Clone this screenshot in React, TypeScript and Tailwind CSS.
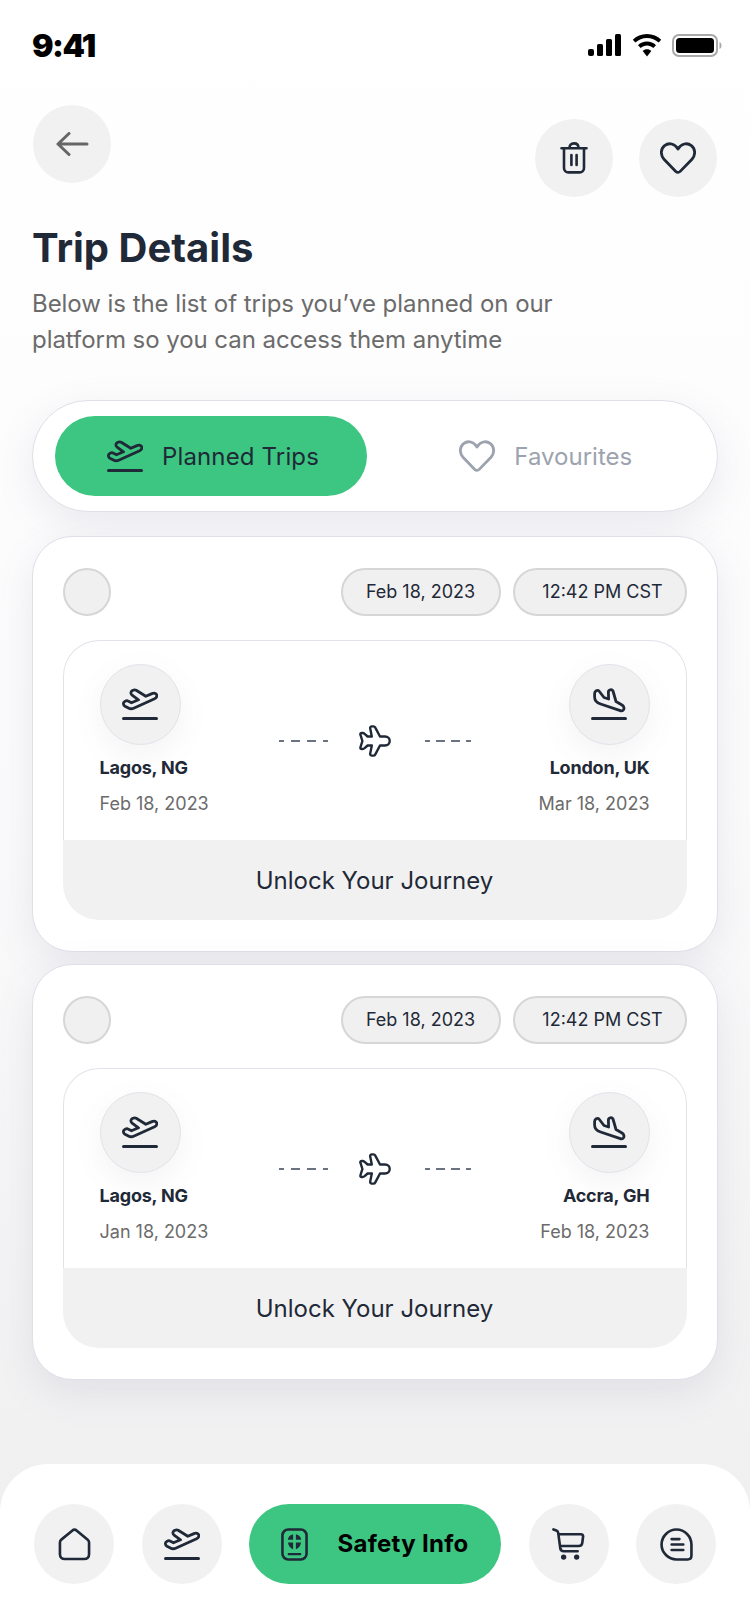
import type { ReactNode } from "react"

const trips = [
  { from: "Lagos, NG", fromDate: "Feb 18, 2023", to: "London, UK", toDate: "Mar 18, 2023" },
  { from: "Lagos, NG", fromDate: "Jan 18, 2023", to: "Accra, GH", toDate: "Feb 18, 2023" },
]

function TakeoffIcon({ className = "" }: { className?: string }) {
  return (
    <svg width="36" height="32" viewBox="0 0 36 32" fill="none" stroke="currentColor" strokeWidth="2.8" strokeLinecap="round" strokeLinejoin="round" className={className}>
      <path d="M5.5 12.8 9.5 14.8 16.5 11.8 9.8 6.8C8.4 5.6 8.8 3.4 10.4 2.6 11.6 2 12.9 1.6 14.2 2.3L23.8 8.3 30 5.6C32.2 4.7 34.4 5.4 34.8 7.2 35.1 8.8 34.2 10 32.6 10.8L12.2 20C10 21 8.2 21 6.4 20L3 18.2C1 17 .9 14.6 2.6 13.6 3.6 13 4.6 12.3 5.5 12.8Z" />
      <path d="M1.5 30.4H34.5" strokeWidth="3" />
    </svg>
  )
}

function LandingIcon({ className = "" }: { className?: string }) {
  return (
    <svg width="36" height="32" viewBox="0 0 36 32" fill="none" stroke="currentColor" strokeWidth="2.8" strokeLinecap="round" strokeLinejoin="round" className={className}>
      <path d="M3.6 5.5C3.6 3.2 6.4 1.4 8 3L13 9.5 17.6 11 17.4 4C17.4 1.6 20.8.8 22 3L25 13.5 31 17C33 18.2 33.4 20.4 32.6 21.6 31.8 23 30 23 28.6 22.4L9.6 16C5.8 14.8 3.6 12.4 3.6 9Z" />
      <path d="M1.5 30.4H34.5" strokeWidth="3" />
    </svg>
  )
}

function PlaneIcon() {
  return (
    <svg width="32" height="32" viewBox="0 0 32 32" fill="none" stroke="currentColor" strokeWidth="2.4" strokeLinejoin="round" className="shrink-0">
      <path d="M11.2 3.4C11 2.3 11.8 1.4 12.8 1.4H14.4C15.2 1.4 15.9 1.8 16.3 2.6L21 11.5H26C29 11.5 30.7 13.8 30.7 16S29 20.5 26 20.5H21L16.3 29.4C15.9 30.2 15.2 30.6 14.4 30.6H12.8C11.8 30.6 11 29.7 11.2 28.6L12.8 20.5H8.6L5.6 23.2C5 23.7 4.4 24 3.6 24H2.6C1.7 24 1.1 23.2 1.4 22.4L3.4 16 1.4 9.6C1.1 8.8 1.7 8 2.6 8H3.6C4.4 8 5 8.3 5.6 8.8L8.6 11.5H12.8Z" />
    </svg>
  )
}

function HeartIcon({ className = "" }: { className?: string }) {
  return (
    <svg width="36" height="32" viewBox="0 0 36 32" fill="none" stroke="currentColor" strokeWidth="2.8" strokeLinejoin="round" className={className}>
      <path d="M18 30.4C17.2 30.4 16.4 30 15.8 29.4L4 17.2C.2 13 .6 6.8 4.6 3.6 8.8.4 14.8 1.4 18 7 21.2 1.4 27.2.4 31.4 3.6 35.4 6.8 35.8 13 32 17.2L20.2 29.4C19.6 30 18.8 30.4 18 30.4Z" />
    </svg>
  )
}

function RoundButton({ children, className = "" }: { children: ReactNode; className?: string }) {
  return <div className={`flex h-[78px] w-[78px] items-center justify-center rounded-full bg-[#f1f1f2] ${className}`}>{children}</div>
}

function NavButton({ children }: { children: ReactNode }) {
  return <div className="flex h-20 w-20 shrink-0 items-center justify-center rounded-full bg-[#f1f1f2]">{children}</div>
}

function Dashes({ className = "" }: { className?: string }) {
  return (
    <div className={`flex ${className}`}>
      <div className="h-[2px] w-[5px] bg-[#6b7280]" />
      <div className="h-[2px] w-[9px] bg-[#6b7280]" />
      <div className="h-[2px] w-[9px] bg-[#6b7280]" />
      <div className="h-[2px] w-[5px] bg-[#6b7280]" />
    </div>
  )
}

function TripCard({ from, fromDate, to, toDate }: (typeof trips)[number]) {
  return (
    <div className="box-border h-[416px] rounded-[40px] border-[1.5px] border-[#dfdfe8] bg-white pt-[30.5px] pr-[30.5px] pl-[29.5px] shadow-[0_12px_40px_rgba(100,100,130,0.12)]">
      <div className="flex items-center justify-between">
        <div className="h-12 w-12 rounded-full border-2 border-[#d6d6d6] bg-[#f0f0f1]" />
        <div className="flex gap-3">
          <div className="flex h-12 w-40 items-center justify-center rounded-full border-2 border-[#d6d6d6] bg-[#f0f0f1] text-[18px] text-[#1f2937]">Feb 18, 2023</div>
          <div className="flex h-12 w-[174px] items-center justify-center rounded-full border-2 border-[#d6d6d6] bg-[#f0f0f1] pl-[6px] text-[18px] text-[#1f2937]">12:42 PM CST</div>
        </div>
      </div>

      <div className="mt-6">
        <div className="grid h-[200px] grid-cols-[1fr_auto_1fr] rounded-t-[36px] border-x-[1.5px] border-t-[1.5px] border-[#e2e2ea] bg-white px-[36px] pt-[23px]">
          <div className="flex flex-col items-start">
            <div className="flex h-[81px] w-[81px] items-center justify-center rounded-full border border-[#e2e2ea] bg-[#f1f1f2] text-[#1f2937] shadow-[0_10px_30px_rgba(100,100,130,0.08)]">
              <TakeoffIcon />
            </div>
            <div className="mt-[11px] text-[18px] leading-6 font-bold tracking-[-0.2px] text-[#1f2937]">{from}</div>
            <div className="mt-[12px] text-[18px] leading-6 text-[#6b6b6b]">{fromDate}</div>
          </div>

          <div className="mt-[61px] flex items-start text-[#1f2937]">
            <Dashes className="mt-[15px] mr-[31px] gap-[7px]" />
            <PlaneIcon />
            <Dashes className="mt-[15px] ml-[34px] gap-[6px]" />
          </div>

          <div className="flex flex-col items-end">
            <div className="flex h-[81px] w-[81px] items-center justify-center rounded-full border border-[#e2e2ea] bg-[#f1f1f2] text-[#1f2937] shadow-[0_10px_30px_rgba(100,100,130,0.08)]">
              <LandingIcon />
            </div>
            <div className="mt-[11px] text-[18px] leading-6 font-bold tracking-[-0.2px] text-[#1f2937]">{to}</div>
            <div className="mt-[12px] text-[18px] leading-6 text-[#6b6b6b]">{toDate}</div>
          </div>
        </div>
        <div className="flex h-20 items-center justify-center rounded-b-[36px] bg-[#f1f1f2] pt-0.5 text-[24px] text-[#1f2937]">Unlock Your Journey</div>
      </div>
    </div>
  )
}

export default function App() {
  return (
    <div className="flex h-[1624px] w-[750px] flex-col overflow-hidden bg-gradient-to-b from-white via-[#fbfbfc] to-[#eeeeef] font-[Inter,sans-serif]">
      {/* Status bar */}
      <div className="flex h-[90px] shrink-0 items-center justify-between pr-[28px] pl-[32px]">
        <span className="pt-0.5 text-[32px] leading-none font-black tracking-[-1.5px] text-black">9:41</span>
        <div className="flex items-center gap-[10px]">
          <svg width="34" height="22" viewBox="0 0 34 22" fill="black">
            <rect x="0" y="15" width="6" height="7" rx="2" />
            <rect x="9" y="10" width="6" height="12" rx="1.5" />
            <rect x="18" y="5" width="6" height="17" rx="1.5" />
            <rect x="27" y="0" width="6" height="22" rx="1.5" />
          </svg>
          <svg width="30" height="23" viewBox="0 0 30 23" fill="black">
            <path d="M15 0C9.4 0 4.4 2.2.8 5.8L3.4 8.6C6.4 5.7 10.5 3.9 15 3.9S23.6 5.7 26.6 8.6L29.2 5.8C25.6 2.2 20.6 0 15 0Z" />
            <path d="M15 7.6C11.5 7.6 8.3 9 6 11.2L8.7 14C10.4 12.5 12.6 11.5 15 11.5S19.6 12.5 21.3 14L24 11.2C21.7 9 18.5 7.6 15 7.6Z" />
            <path d="M15 15.2C13.3 15.2 11.8 15.8 10.7 16.9L15 22.5 19.3 16.9C18.2 15.8 16.7 15.2 15 15.2Z" />
          </svg>
          <svg width="50" height="23" viewBox="0 0 50 23" fill="none">
            <rect x="1" y="1" width="44" height="21" rx="6" stroke="#a9a9a9" strokeWidth="2" />
            <rect x="4" y="4" width="38" height="15" rx="3.5" fill="black" />
            <path d="M47.5 8v7c1.2-.5 2-1.9 2-3.5s-.8-3-2-3.5Z" fill="#a9a9a9" />
          </svg>
        </div>
      </div>

      <div className="flex flex-col px-8">
        {/* Header */}
        <div className="mt-[15px] flex h-[92px] justify-between pr-px pl-px">
          <RoundButton className="self-start">
            <svg width="33" height="24" viewBox="0 0 33 24" fill="none" stroke="#666666" strokeWidth="3" strokeLinecap="round" strokeLinejoin="round">
              <path d="M31 12H2M13 1.5 2 12 13 22.5" />
            </svg>
          </RoundButton>
          <div className="flex gap-[26px] self-end">
            <RoundButton>
              <svg width="28" height="32" viewBox="0 0 28 32" fill="none" stroke="#1f2937" strokeWidth="2.6" strokeLinecap="round" strokeLinejoin="round">
                <path d="M1.5 6.2H26.5M4 6.2V26C4 28.6 5.8 30.4 8.4 30.4H19.6C22.2 30.4 24 28.6 24 26V6.2M9.5 6C9.5 3 11 1.4 14 1.4S18.5 3 18.5 6M11.4 13V23M16.6 13V23" />
              </svg>
            </RoundButton>
            <RoundButton>
              <HeartIcon className="text-[#1f2937]" />
            </RoundButton>
          </div>
        </div>

        <h1 className="mt-[27px] text-[40px] leading-[48px] font-bold text-[#1f2937]">Trip Details</h1>
        <p className="mt-[14px] w-[600px] text-[24px] leading-9 tracking-[-0.05px] text-[#6b6b6b]">
          Below is the list of trips you’ve planned on our
          <br />
          platform so you can access them anytime
        </p>

        {/* Tabs */}
        <div className="mt-[42px] flex h-[112px] w-[686px] items-center rounded-[56px] border-[1.5px] border-[#dfdfe8] bg-white pl-[21.5px] shadow-[0_12px_40px_rgba(100,100,130,0.12)]">
          <div className="flex h-20 w-[312px] items-center justify-center gap-[19px] rounded-[40px] bg-[#3cc681] pl-[5px] text-[24px] tracking-[0.15px] text-[#1f2937]">
            <TakeoffIcon />
            <span className="pt-px">Planned Trips</span>
          </div>
          <div className="flex flex-1 items-center justify-center gap-[19px] pl-2 text-[24px] text-[#9ca3af]">
            <HeartIcon />
            <span className="pt-px">Favourites</span>
          </div>
        </div>

        {/* Trips */}
        <div className="mt-6 flex flex-col gap-3">
          {trips.map((trip, i) => (
            <TripCard key={i} {...trip} />
          ))}
        </div>
      </div>

      {/* Bottom nav */}
      <div className="mt-auto flex h-40 shrink-0 items-start justify-between rounded-t-[48px] bg-white pt-10 pr-[34px] pl-[34px]">
        <NavButton>
          <svg width="33" height="33" viewBox="0 0 34 34" fill="none" stroke="#1f2937" strokeWidth="2.7" strokeLinejoin="round">
            <path d="M14.6 2.8C16 1.6 18 1.6 19.4 2.8L30.6 12C31.6 12.8 32 13.8 32 15V27C32 30 30 32 27 32H7C4 32 2 30 2 27V15C2 13.8 2.4 12.8 3.4 12Z" />
          </svg>
        </NavButton>
        <NavButton>
          <TakeoffIcon className="text-[#1f2937]" />
        </NavButton>
        <div className="flex h-20 w-[252px] shrink-0 items-center justify-center gap-[29px] rounded-[40px] bg-[#3cc681]">
          <svg width="27" height="33" viewBox="0 0 28 34" fill="none" stroke="#1f2937" strokeWidth="2.7" strokeLinecap="round">
            <rect x="1.5" y="1.5" width="25" height="31" rx="6" />
            <path d="M8 27H20" strokeWidth="2.2" />
            <g fill="#1f2937" stroke="none">
              <path d="M12.6 6.4V12H7C7.5 9 9.6 7 12.6 6.4Z" />
              <path d="M15.4 6.4V12H21C20.5 9 18.4 7 15.4 6.4Z" />
              <path d="M12.6 21.8V15H7.2C7.7 18.4 9.6 20.9 12.6 21.8Z" />
              <path d="M15.4 21.8V15H20.8C20.3 18.4 18.4 20.9 15.4 21.8Z" />
            </g>
          </svg>
          <span className="text-[24px] font-bold tracking-[0.3px] text-black">Safety Info</span>
        </div>
        <NavButton>
          <svg width="33" height="33" viewBox="0 0 34 34" fill="none" stroke="#1f2937" strokeWidth="2.7" strokeLinecap="round" strokeLinejoin="round">
            <path d="M1.5 1.5 4.5 2.6C5.6 3 6.2 3.8 6.4 5L8.6 21.2C8.9 23 10.2 24 12 24H26.4M6.6 6.4H29.6C31.4 6.4 32.2 7.4 32 9L31.2 15.4C31 17.4 29.6 18.6 27.6 18.6H8.2" />
            <circle cx="12" cy="30" r="1.4" fill="#1f2937" />
            <circle cx="25.4" cy="30" r="1.4" fill="#1f2937" />
          </svg>
        </NavButton>
        <NavButton>
          <svg width="33" height="33" viewBox="0 0 34 34" fill="none" stroke="#1f2937" strokeWidth="2.7" strokeLinecap="round" strokeLinejoin="round">
            <path d="M17 1.6C25.4 1.6 32.4 8.6 32.4 17V28.4C32.4 30.8 30.8 32.4 28.4 32.4H17C8.6 32.4 1.6 25.4 1.6 17S8.6 1.6 17 1.6Z" />
            <path d="M12 11.4H20M12 17H24M12 22.6H24" />
          </svg>
        </NavButton>
      </div>
    </div>
  )
}
